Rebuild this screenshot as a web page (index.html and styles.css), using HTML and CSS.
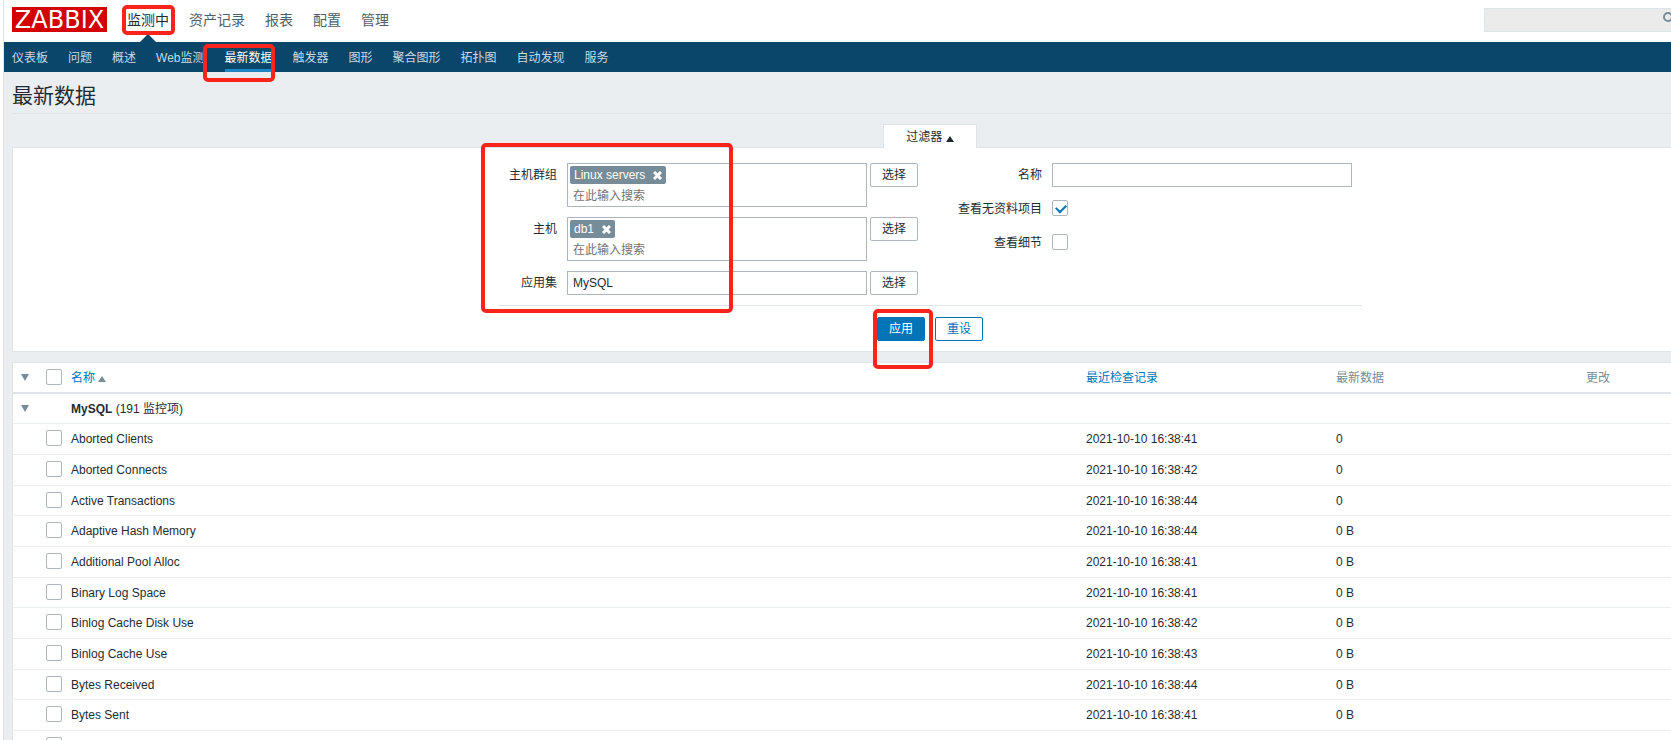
FILE: index.html
```html
<!DOCTYPE html>
<html lang="zh-CN">
<head>
<meta charset="utf-8">
<title>最新数据</title>
<link rel="stylesheet" href="styles.css">
</head>
<body>
<div class="page">
  <header class="top">
    <a class="logo" href="#">ZABBIX</a>
    <nav class="menu">
      <a class="menu-item current" href="#">监测中<span class="mark mark-menu"></span></a>
      <a class="menu-item" href="#">资产记录</a>
      <a class="menu-item" href="#">报表</a>
      <a class="menu-item" href="#">配置</a>
      <a class="menu-item" href="#">管理</a>
    </nav>
    <div class="search">
      <input class="search-input" type="text" aria-label="搜索">
      <svg class="search-icon" width="14" height="14" viewBox="0 0 14 14" aria-hidden="true"><circle cx="5" cy="5" r="4" fill="none" stroke="#768d99" stroke-width="2"/><path d="M8 8l5 5" stroke="#768d99" stroke-width="2"/></svg>
    </div>
  </header>
  <nav class="submenu">
    <a href="#">仪表板</a>
    <a href="#">问题</a>
    <a href="#">概述</a>
    <a href="#">Web监测</a>
    <a class="selected" href="#">最新数据<span class="mark mark-sub"></span></a>
    <a href="#">触发器</a>
    <a href="#">图形</a>
    <a href="#">聚合图形</a>
    <a href="#">拓扑图</a>
    <a href="#">自动发现</a>
    <a href="#">服务</a>
  </nav>
  <main class="content">
    <h1 class="title">最新数据</h1>
    <button class="filter-tab" type="button">过滤器 <svg width="8" height="6" viewBox="0 0 8 6" aria-hidden="true"><path d="M0 6L4 0L8 6z" fill="#1f2c33"/></svg></button>
    <form class="filter">
      <div class="filter-body">
        <div class="fields fields-left">
          <label for="groups">主机群组</label>
          <div class="multi">
            <span class="tag">Linux servers <button class="tag-x" type="button" aria-label="移除 Linux servers"><svg width="9" height="9" viewBox="0 0 9 9"><path d="M1 1l7 7M8 1l-7 7" stroke="#fff" stroke-width="3"/></svg></button></span>
            <input id="groups" type="text" placeholder="在此输入搜索">
          </div>
          <button class="btn" type="button">选择</button>
          <label for="hosts">主机</label>
          <div class="multi">
            <span class="tag">db1 <button class="tag-x" type="button" aria-label="移除 db1"><svg width="9" height="9" viewBox="0 0 9 9"><path d="M1 1l7 7M8 1l-7 7" stroke="#fff" stroke-width="3"/></svg></button></span>
            <input id="hosts" type="text" placeholder="在此输入搜索">
          </div>
          <button class="btn" type="button">选择</button>
          <label for="app">应用集</label>
          <input class="text" id="app" type="text" value="MySQL">
          <button class="btn" type="button">选择</button>
        </div>
        <div class="fields fields-right">
          <label for="name">名称</label>
          <input class="text" id="name" type="text">
          <label for="nodata">查看无资料项目</label>
          <input class="check" id="nodata" type="checkbox" checked>
          <label for="details">查看细节</label>
          <input class="check" id="details" type="checkbox">
        </div>
        <span class="mark mark-fields"></span>
      </div>
      <div class="actions">
        <span class="apply"><button class="btn btn-main" type="button">应用</button><span class="mark mark-apply"></span></span>
        <button class="btn btn-alt" type="button">重设</button>
      </div>
    </form>
    <table class="data">
      <colgroup><col class="c-toggle"><col class="c-check"><col><col class="c-time"><col class="c-value"><col class="c-change"></colgroup>
      <thead>
        <tr>
          <th><button class="toggle" type="button" aria-label="全部折叠"></button></th>
          <th><input class="check" type="checkbox" aria-label="全选"></th>
          <th><a href="#">名称<svg class="sort" width="8" height="6" viewBox="0 0 8 6" aria-hidden="true"><path d="M0 6L4 0L8 6z" fill="#768d99"/></svg></a></th>
          <th><a href="#">最近检查记录</a></th>
          <th>最新数据</th>
          <th>更改</th>
        </tr>
      </thead>
      <tbody>
        <tr><td><button class="toggle" type="button" aria-label="折叠 MySQL"></button></td><td></td><td colspan="4"><b>MySQL</b> (191 监控项)</td></tr>
        <tr><td></td><td><input class="check" type="checkbox" aria-label="Aborted Clients"></td><td>Aborted Clients</td><td>2021-10-10 16:38:41</td><td>0</td><td></td></tr>
        <tr><td></td><td><input class="check" type="checkbox" aria-label="Aborted Connects"></td><td>Aborted Connects</td><td>2021-10-10 16:38:42</td><td>0</td><td></td></tr>
        <tr><td></td><td><input class="check" type="checkbox" aria-label="Active Transactions"></td><td>Active Transactions</td><td>2021-10-10 16:38:44</td><td>0</td><td></td></tr>
        <tr><td></td><td><input class="check" type="checkbox" aria-label="Adaptive Hash Memory"></td><td>Adaptive Hash Memory</td><td>2021-10-10 16:38:44</td><td>0 B</td><td></td></tr>
        <tr><td></td><td><input class="check" type="checkbox" aria-label="Additional Pool Alloc"></td><td>Additional Pool Alloc</td><td>2021-10-10 16:38:41</td><td>0 B</td><td></td></tr>
        <tr><td></td><td><input class="check" type="checkbox" aria-label="Binary Log Space"></td><td>Binary Log Space</td><td>2021-10-10 16:38:41</td><td>0 B</td><td></td></tr>
        <tr><td></td><td><input class="check" type="checkbox" aria-label="Binlog Cache Disk Use"></td><td>Binlog Cache Disk Use</td><td>2021-10-10 16:38:42</td><td>0 B</td><td></td></tr>
        <tr><td></td><td><input class="check" type="checkbox" aria-label="Binlog Cache Use"></td><td>Binlog Cache Use</td><td>2021-10-10 16:38:43</td><td>0 B</td><td></td></tr>
        <tr><td></td><td><input class="check" type="checkbox" aria-label="Bytes Received"></td><td>Bytes Received</td><td>2021-10-10 16:38:44</td><td>0 B</td><td></td></tr>
        <tr><td></td><td><input class="check" type="checkbox" aria-label="Bytes Sent"></td><td>Bytes Sent</td><td>2021-10-10 16:38:41</td><td>0 B</td><td></td></tr>
        <tr><td></td><td><input class="check" type="checkbox" aria-label="监控项"></td><td></td><td></td><td></td><td></td></tr>
      </tbody>
    </table>
  </main>
</div>
</body>
</html>
```
FILE: styles.css
```css
* { box-sizing: border-box; }
html { height: 100%; }
body {
  margin: 0;
  height: 100%;
  overflow: hidden;
  background: #fff;
  color: #1f2c33;
  font: 12px/18px "Liberation Sans", "Noto Sans CJK SC", sans-serif;
}
input, button { font: inherit; color: inherit; }
a { color: #0275b8; text-decoration: none; }
button { cursor: pointer; }

.page {
  margin-left: 3px;
  min-height: 100%;
  overflow: hidden;
  border-left: 1px solid #dfe4e7;
  background: #ebeef0;
}

.top {
  display: flex;
  align-items: center;
  height: 42px;
  padding-left: 8px;
  background: #fff;
}
.logo {
  width: 95px;
  height: 25px;
  margin-bottom: 3px;
  background: #d40000;
  color: #fff;
  font: 24px/26px "DejaVu Sans", sans-serif;
  text-align: center;
}
.menu {
  display: flex;
  gap: 20px;
  margin-left: 20px;
  height: 42px;
  font-size: 14px;
  line-height: 40px;
}
.menu-item { position: relative; color: #4f5f68; }
.menu-item.current { color: #1f2c33; }
.menu-item.current::after {
  content: "";
  position: absolute;
  left: 13px;
  bottom: 0;
  border: solid transparent;
  border-width: 0 8px 8px;
  border-bottom-color: #0a466a;
}
.search {
  position: relative;
  width: 187px;
  height: 24px;
  margin-left: auto;
  margin-bottom: 2px;
  overflow: hidden;
}
.search-input {
  width: 100%;
  height: 100%;
  border: 1px solid #dfe4e7;
  border-right: 0;
  background: #ebebeb;
}
.search-icon { position: absolute; right: -6px; top: 4px; }

.submenu {
  display: flex;
  gap: 20px;
  height: 30px;
  padding-left: 8px;
  background: #0a466a;
  line-height: 32px;
}
.submenu a { position: relative; height: 30px; color: #c5dbe8; }
.submenu .selected { color: #fff; border-bottom: 3px solid #1f86c4; }

.content {
  width: calc(100% + 177px);
  padding-left: 8px;
}
.title {
  margin: 0 0 10px;
  padding: 8px 0 1px;
  border-bottom: 1px solid #dfe4e7;
  font-size: 21px;
  font-weight: 400;
  line-height: 32px;
}
.filter-tab {
  position: relative;
  display: block;
  height: 24px;
  width: 94px;
  margin: 0 auto -1px;
  padding: 0;
  border: 1px solid #dfe4e7;
  border-bottom: 0;
  background: #fff;
}
.filter-tab svg { vertical-align: -1px; }
.filter {
  padding: 15px 0 10px;
  border: 1px solid #dfe4e7;
  background: #fff;
}
.filter-body {
  position: relative;
  display: flex;
  justify-content: space-between;
  width: 864px;
  margin: 0 auto;
  padding: 0 10px 10px 0;
  border-bottom: 1px solid #dfe4e7;
}
.fields { display: grid; align-content: start; row-gap: 10px; }
.fields-left { grid-template-columns: 66px 300px 48px; column-gap: 3px; }
.fields-right { grid-template-columns: auto 300px; column-gap: 10px; }
.fields label { line-height: 24px; text-align: right; }
.fields-left label { padding-right: 7px; }
.fields .check { align-self: center; }
.text {
  width: 100%;
  height: 24px;
  padding: 0 5px;
  border: 1px solid #acb6bc;
  background: #fff;
}
.multi {
  display: flex;
  flex-direction: column;
  align-items: flex-start;
  height: 44px;
  padding: 2px;
  border: 1px solid #acb6bc;
}
.tag {
  display: flex;
  align-items: center;
  gap: 8px;
  height: 18px;
  padding: 0 4px;
  border-radius: 2px;
  background: #768d99;
  color: #fff;
}
.tag-x { display: flex; padding: 0; border: 0; background: none; }
.multi input {
  width: 100%;
  height: 20px;
  padding: 3px 3px 0;
  border: 0;
  background: none;
}
.multi input::placeholder { color: #737373; }
.btn {
  width: 48px;
  height: 24px;
  padding: 0;
  border: 1px solid #acb6bc;
  border-radius: 2px;
  background: #fff;
}
.btn-main { border-color: #0275b8; background: #0275b8; color: #fff; }
.btn-alt { border-color: #0275b8; color: #0275b8; }
.actions {
  display: flex;
  justify-content: center;
  gap: 10px;
  padding-top: 11px;
}
.apply { position: relative; }

.check {
  appearance: none;
  display: block;
  width: 16px;
  height: 16px;
  margin: 0 0 2px;
  border: 1px solid #acb6bc;
  border-radius: 2px;
  background: #fff;
}
.check:checked::after {
  content: "";
  display: block;
  width: 8px;
  height: 5px;
  margin: 3px 0 0 3px;
  border: solid #0275b8;
  border-width: 0 0 2px 2px;
  transform: rotate(-45deg);
}

.data {
  width: 100%;
  margin-top: 10px;
  table-layout: fixed;
  border-spacing: 0;
  border: 1px solid #dfe4e7;
  background: #fff;
}
.c-toggle { width: 28px; }
.c-check { width: 25px; }
.c-time, .c-value { width: 250px; }
.c-change { width: 266px; }
.data th, .data td {
  padding: 0 5px;
  border-bottom: 1px solid #ebeef0;
  text-align: left;
}
.data th {
  height: 31px;
  border-bottom: 2px solid #dfe4e7;
  color: #768d99;
  font-weight: 400;
}
.data tbody tr { height: 31px; }
.data tbody tr:nth-child(3n+1) { height: 30px; }
.sort { margin-left: 3px; }
.toggle {
  display: block;
  width: 8px;
  height: 7px;
  margin-left: 3px;
  padding: 0;
  border: 0;
  background: #768d99;
  clip-path: polygon(0 0, 100% 0, 50% 100%);
}

.mark {
  position: absolute;
  z-index: 2;
  border: 4px solid #fb241c;
  border-radius: 5px;
  pointer-events: none;
}
.mark-menu { left: -5px; right: -6px; top: 5px; height: 30px; }
.mark-sub { left: -22px; right: -2px; top: 2px; height: 38px; }
.mark-fields { left: -17px; top: -20px; bottom: -8px; width: 252px; }
.mark-apply { left: -4px; top: -8px; width: 60px; height: 60px; }
```
